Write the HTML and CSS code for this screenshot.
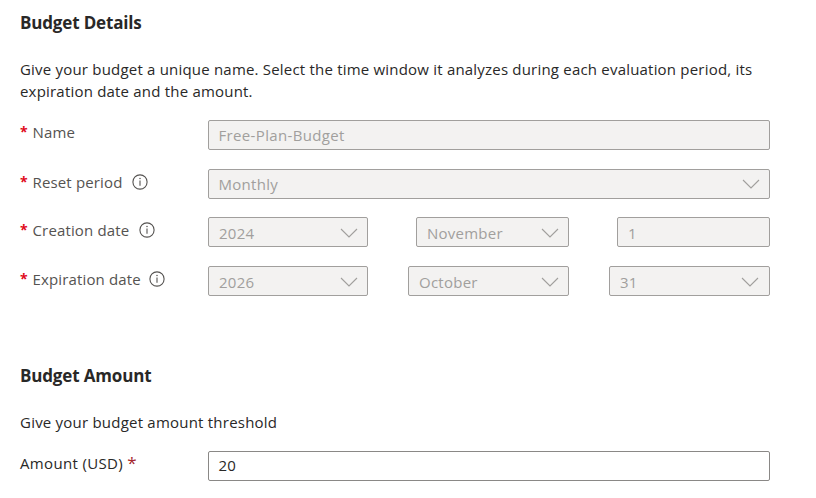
FILE: index.html
```html
<!DOCTYPE html>
<html lang="en">
<head>
<meta charset="utf-8">
<title>Budget Details</title>
<link rel="stylesheet" href="styles.css">
</head>
<body>
<svg class="defs" width="0" height="0">
  <symbol id="info" viewBox="0 0 16 16"><circle cx="8" cy="8" r="7.1" fill="none" stroke="currentColor" stroke-width="1.1"/><path d="M8 6.5v5.3" stroke="currentColor" stroke-width="1.1"/><circle cx="8" cy="4.6" r=".75" fill="currentColor"/></symbol>
  <symbol id="chevron" viewBox="0 0 18 10"><path d="M1 1l8 8 8-8" fill="none" stroke="currentColor" stroke-width="1.1"/></symbol>
</svg>
<main class="form">
  <section class="details">
    <h2>Budget Details</h2>
    <p class="intro">Give your budget a unique name. Select the time window it analyzes during each evaluation period, its<br>expiration date and the amount.</p>
    <div class="row name">
      <label><b class="req">*</b>Name</label>
      <div class="field disabled"><span>Free-Plan-Budget</span></div>
    </div>
    <div class="row period">
      <label><b class="req">*</b>Reset period<svg class="info"><use href="#info"/></svg></label>
      <div class="field disabled"><span>Monthly</span><svg class="chevron"><use href="#chevron"/></svg></div>
    </div>
    <div class="row creation">
      <label><b class="req">*</b>Creation date<svg class="info"><use href="#info"/></svg></label>
      <div class="dates">
        <div class="field disabled"><span>2024</span><svg class="chevron"><use href="#chevron"/></svg></div>
        <div class="field disabled"><span>November</span><svg class="chevron"><use href="#chevron"/></svg></div>
        <div class="field disabled"><span>1</span></div>
      </div>
    </div>
    <div class="row expiration">
      <label><b class="req">*</b>Expiration date<svg class="info"><use href="#info"/></svg></label>
      <div class="dates">
        <div class="field disabled"><span>2026</span><svg class="chevron"><use href="#chevron"/></svg></div>
        <div class="field disabled"><span>October</span><svg class="chevron"><use href="#chevron"/></svg></div>
        <div class="field disabled last"><span>31</span><svg class="chevron"><use href="#chevron"/></svg></div>
      </div>
    </div>
  </section>
  <section class="amount">
    <h2>Budget Amount</h2>
    <p class="intro">Give your budget amount threshold</p>
    <div class="row">
      <label>Amount (USD)<span class="req-after">*</span></label>
      <div class="field"><span>20</span></div>
    </div>
  </section>
</main>
</body>
</html>
```
FILE: styles.css
```css
* { box-sizing: border-box; }
body { margin: 0; background: #fff; color: #292827; font: 15px/22px "Open Sans", "Noto Sans", sans-serif; letter-spacing: .2px; overflow: hidden; }
.defs { position: absolute; }
.form { width: 770px; padding: 11px 0 0 20px; }
h2 { margin: 0 0 24px; font-size: 17px; line-height: 23px; font-weight: 700; letter-spacing: -.16px; }
.intro { margin: 0 0 18px; white-space: nowrap; }
.row { display: grid; grid-template-columns: 188px 562px; height: 30px; margin-bottom: 19px; }
.row label { display: flex; align-items: center; height: 26px; white-space: nowrap; color: #555351; letter-spacing: .15px; }
.name label { height: 24px; }
.req { flex: none; width: 12.5px; color: #e00b1c; font-size: 14px; font-weight: 700; }
.req-after { margin-left: 4px; color: #a4262c; font-size: 17px; }
.field { display: flex; align-items: center; justify-content: space-between; height: 30px; padding: 0 9px 0 9.5px; border: 1px solid #8a8886; border-radius: 2px; }
.disabled { background: #f3f2f1; border-color: #a19f9d; color: #a19f9d; }
.name .field { letter-spacing: .35px; }
.period .field { letter-spacing: .3px; }
.info { width: 16px; height: 16px; margin-left: 9px; color: #555351; }
.creation .info { margin-left: 10px; }
.expiration .info { margin-left: 8px; }
.chevron { width: 18px; height: 10px; color: #a19f9d; }
.dates { display: grid; }
.dates .field { padding-top: 1px; padding-left: 10px; letter-spacing: .25px; }
.dates .field span { padding-top: 1px; }
.dates .last { padding-right: 10px; }
.period { margin-bottom: 18px; }
.creation .dates { grid-template-columns: 160px 153px 153px; column-gap: 48px; }
.expiration .dates { grid-template-columns: 160px 161px 161px; column-gap: 40px; }
.expiration { margin-bottom: 0; }
.amount { padding-top: 68px; }
.amount .intro { letter-spacing: .22px; }
.amount label { height: 24px; color: #292827; letter-spacing: .35px; }
.amount .field span { padding-bottom: 2px; }
```
